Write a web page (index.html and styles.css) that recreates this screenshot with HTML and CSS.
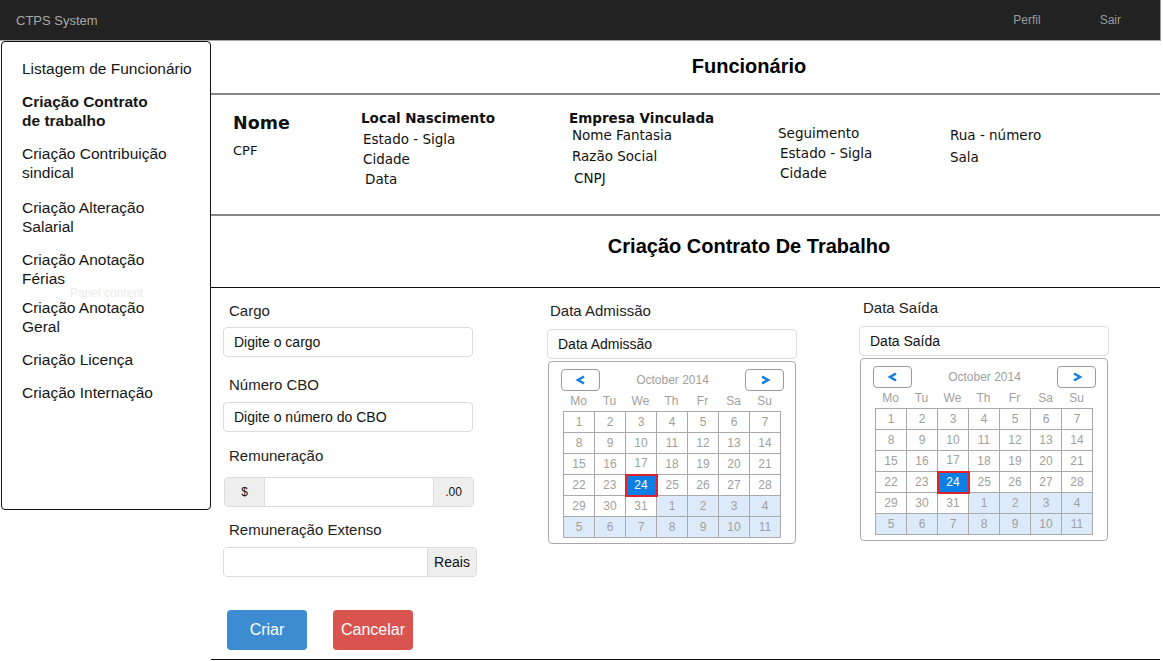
FILE: index.html
```html
<!DOCTYPE html>
<html lang="pt-BR">
<head>
<meta charset="utf-8">
<title>CTPS System</title>
<link rel="stylesheet" href="styles.css">
</head>
<body>
<header class="topbar">
  <span class="brand">CTPS System</span>
  <nav class="topnav"><a class="topnav-perfil">Perfil</a><a class="topnav-sair">Sair</a></nav>
</header>
<div class="layout">
  <aside class="sidebar">
    <a class="side-item">Listagem de Funcionário</a>
    <a class="side-item active">Criação Contrato<br>de trabalho</a>
    <a class="side-item">Criação Contribuição<br>sindical</a>
    <a class="side-item gap-lg">Criação Alteração<br>Salarial</a>
    <a class="side-item">Criação Anotação<br>Férias</a>
    <a class="side-item gap-sm">Criação Anotação<br>Geral</a>
    <a class="side-item">Criação Licença</a>
    <a class="side-item">Criação Internação</a>
    <span class="panel-ghost">Panel content</span>
  </aside>
  <main class="main">
    <section class="title-func"><h1 class="title">Funcionário</h1></section>
    <section class="info">
      <div class="info-col col-nome">
        <div class="nome">Nome</div>
        <div class="item cpf">CPF</div>
      </div>
      <div class="info-col col-local">
        <div class="info-head">Local Nascimento</div>
        <div class="item ind2 first">Estado - Sigla</div>
        <div class="item ind2">Cidade</div>
        <div class="item ind4">Data</div>
      </div>
      <div class="info-col col-empresa">
        <div class="info-head">Empresa Vinculada</div>
        <div class="item ind3 tight">Nome Fantasia</div>
        <div class="item ind3">Razão Social</div>
        <div class="item ind5 loose">CNPJ</div>
      </div>
      <div class="info-col col-seg">
        <div class="item">Seguimento</div>
        <div class="item ind2">Estado - Sigla</div>
        <div class="item ind2">Cidade</div>
      </div>
      <div class="info-col col-rua">
        <div class="item">Rua - número</div>
        <div class="item loose">Sala</div>
      </div>
    </section>
    <section class="title-contract"><h2 class="title">Criação Contrato De Trabalho</h2></section>
    <section class="form">
      <div class="col col-left">
        <label class="field-label">Cargo</label>
        <div class="input mt7">Digite o cargo</div>
        <label class="field-label mt19">Número CBO</label>
        <div class="input mt8">Digite o número do CBO</div>
        <label class="field-label mt15">Remuneração</label>
        <div class="input-group group-money mt12">
          <span class="addon addon-dollar">$</span>
          <span class="group-field"></span>
          <span class="addon addon-cents">.00</span>
        </div>
        <label class="field-label mt14">Remuneração Extenso</label>
        <div class="input-group group-extenso mt8">
          <span class="group-field"></span>
          <span class="addon addon-reais">Reais</span>
        </div>
        <div class="buttons">
          <button class="btn btn-primary">Criar</button>
          <button class="btn btn-danger">Cancelar</button>
        </div>
      </div>

      <div class="col col-mid">
        <label class="field-label">Data Admissão</label>
        <div class="input mt9">Data Admissão</div>
        <div class="cal">
          <div class="cal-nav">
            <span class="cal-btn"><svg width="12" height="10" viewBox="0 0 12 10"><polyline points="9,1.5 3,5 9,8.5" fill="none" stroke="#1a7fe0" stroke-width="2.6" stroke-linejoin="miter"/></svg></span>
            <span class="cal-month">October 2014</span>
            <span class="cal-btn"><svg width="12" height="10" viewBox="0 0 12 10"><polyline points="3,1.5 9,5 3,8.5" fill="none" stroke="#1a7fe0" stroke-width="2.6" stroke-linejoin="miter"/></svg></span>
          </div>
          <div class="cal-days"><span>Mo</span><span>Tu</span><span>We</span><span>Th</span><span>Fr</span><span>Sa</span><span>Su</span></div>
          <table class="cal-grid">
            <tr><td>1</td><td>2</td><td>3</td><td>4</td><td>5</td><td>6</td><td>7</td></tr>
            <tr><td>8</td><td>9</td><td>10</td><td>11</td><td>12</td><td>13</td><td>14</td></tr>
            <tr><td>15</td><td>16</td><td>17</td><td>18</td><td>19</td><td>20</td><td>21</td></tr>
            <tr><td>22</td><td>23</td><td class="sel">24</td><td>25</td><td>26</td><td>27</td><td>28</td></tr>
            <tr><td>29</td><td>30</td><td>31</td><td class="nx">1</td><td class="nx">2</td><td class="nx">3</td><td class="nx">4</td></tr>
            <tr><td class="nx">5</td><td class="nx">6</td><td class="nx">7</td><td class="nx">8</td><td class="nx">9</td><td class="nx">10</td><td class="nx">11</td></tr>
          </table>
        </div>
      </div>

      <div class="col col-right">
        <label class="field-label">Data Saída</label>
        <div class="input mt9">Data Saída</div>
        <div class="cal">
          <div class="cal-nav">
            <span class="cal-btn"><svg width="12" height="10" viewBox="0 0 12 10"><polyline points="9,1.5 3,5 9,8.5" fill="none" stroke="#1a7fe0" stroke-width="2.6" stroke-linejoin="miter"/></svg></span>
            <span class="cal-month">October 2014</span>
            <span class="cal-btn"><svg width="12" height="10" viewBox="0 0 12 10"><polyline points="3,1.5 9,5 3,8.5" fill="none" stroke="#1a7fe0" stroke-width="2.6" stroke-linejoin="miter"/></svg></span>
          </div>
          <div class="cal-days"><span>Mo</span><span>Tu</span><span>We</span><span>Th</span><span>Fr</span><span>Sa</span><span>Su</span></div>
          <table class="cal-grid">
            <tr><td>1</td><td>2</td><td>3</td><td>4</td><td>5</td><td>6</td><td>7</td></tr>
            <tr><td>8</td><td>9</td><td>10</td><td>11</td><td>12</td><td>13</td><td>14</td></tr>
            <tr><td>15</td><td>16</td><td>17</td><td>18</td><td>19</td><td>20</td><td>21</td></tr>
            <tr><td>22</td><td>23</td><td class="sel">24</td><td>25</td><td>26</td><td>27</td><td>28</td></tr>
            <tr><td>29</td><td>30</td><td>31</td><td class="nx">1</td><td class="nx">2</td><td class="nx">3</td><td class="nx">4</td></tr>
            <tr><td class="nx">5</td><td class="nx">6</td><td class="nx">7</td><td class="nx">8</td><td class="nx">9</td><td class="nx">10</td><td class="nx">11</td></tr>
          </table>
        </div>
      </div>
    </section>
  </main>
</div>
</body>
</html>
```

FILE: styles.css
```css
* { box-sizing: border-box; }
html, body { margin: 0; padding: 0; background: #fff; }
body {
  font-family: "Liberation Sans", Arial, sans-serif;
  color: #111;
  width: 1163px;
  height: 661px;
  overflow: hidden;
}

/* top bar */
.topbar {
  width: 1161px;
  height: 41px;
  background: #222;
  border-right: 1px solid #999;
  border-bottom: 1px solid #aaa;
  display: flex;
  align-items: center;
  padding-left: 16px;
}
.brand { font-size: 13px; color: #a8a8a8; }
.topnav { margin-left: auto; display: flex; font-size: 12px; color: #9a9a9a; }
.topnav-perfil { margin-right: 59px; }
.topnav-sair { margin-right: 39px; }

/* layout */
.layout { display: flex; align-items: flex-start; }

.sidebar {
  position: relative;
  margin-left: 1px;
  width: 210px;
  height: 469px;
  border: 1px solid #111;
  border-radius: 4px;
  background: #fff;
  padding: 17px 0 0 20px;
  display: flex;
  flex-direction: column;
  gap: 14px;
  font-size: 15.5px;
  line-height: 19px;
  color: #161616;
}
.side-item { display: block; }
.side-item.active { font-weight: bold; }
.side-item.gap-lg { margin-top: 2px; }
.side-item.gap-sm { margin-top: -4px; }
.panel-ghost {
  position: absolute;
  left: 68px;
  top: 242px;
  font-size: 12px;
  color: #ececec;
}

.main { width: 949px; }

.title {
  margin: 0;
  font-size: 20px;
  font-weight: bold;
  line-height: 22px;
  color: #000;
  text-align: center;
  padding-left: 127px;
}
.title-func {
  height: 54px;
  border-bottom: 2px solid #888;
  padding-top: 14px;
}
.title-contract {
  height: 72px;
  border-bottom: 1px solid #111;
  padding-top: 19px;
}

/* info */
.info {
  height: 121px;
  border-bottom: 2px solid #888;
  display: flex;
  padding-left: 22px;
  font-family: "DejaVu Sans", Verdana, sans-serif;
  font-size: 13.5px;
  color: #111;
}
.info-col { display: flex; flex-direction: column; }
.col-nome { width: 128px; padding-top: 17px; }
.col-local { width: 208px; padding-top: 14px; }
.col-empresa { width: 209px; padding-top: 14px; }
.col-seg { width: 172px; padding-top: 28px; }
.col-rua { padding-top: 30px; }
.nome { font-weight: bold; font-size: 17.5px; line-height: 22px; }
.cpf { margin-top: 7px; font-size: 13px; }
.info-head { font-weight: bold; font-size: 13.5px; line-height: 18px; }
.item { line-height: 20px; }
.first { margin-top: 2px; }
.ind2 { margin-left: 2px; }
.ind3 { margin-left: 3px; }
.ind4 { margin-left: 4px; }
.ind5 { margin-left: 5px; }
.tight { margin-top: -2px; line-height: 21px; }
.loose { margin-top: 2px; }

/* form */
.form {
  height: 372px;
  border-bottom: 1px solid #111;
  display: flex;
  padding: 14px 0 0 12px;
}
.col { display: flex; flex-direction: column; }
.col-left { width: 254px; }
.col-mid { width: 250px; margin-left: 70px; }
.col-right { width: 250px; margin-left: 62px; margin-top: -3px; }

.field-label {
  font-size: 15px;
  line-height: 18px;
  color: #222;
  margin-left: 6px;
}
.col-mid .field-label { margin-left: 3px; }
.col-right .field-label { margin-left: 4px; }

.mt7 { margin-top: 7px; }
.mt8 { margin-top: 8px; }
.mt9 { margin-top: 9px; }
.mt12 { margin-top: 12px; }
.mt14 { margin-top: 14px; }
.mt15 { margin-top: 15px; }
.mt19 { margin-top: 19px; }

.input {
  width: 250px;
  height: 30px;
  border: 1px solid #dcdcdc;
  border-radius: 4px;
  padding-left: 10px;
  font-size: 14px;
  line-height: 28px;
  color: #111;
}

.input-group {
  display: flex;
  height: 30px;
  border: 1px solid #dcdcdc;
  border-radius: 4px;
  overflow: hidden;
}
.group-money { width: 250px; margin-left: 1px; }
.group-extenso { width: 254px; }
.group-field { flex: 1; background: #fff; }
.addon {
  background: #eee;
  display: flex;
  align-items: center;
  justify-content: center;
  color: #111;
}
.addon-dollar { width: 40px; border-right: 1px solid #dcdcdc; font-size: 12px; }
.addon-cents { width: 40px; border-left: 1px solid #dcdcdc; font-size: 12px; }
.addon-reais { width: 49px; border-left: 1px solid #dcdcdc; font-size: 14px; }

.buttons { display: flex; gap: 26px; margin-top: 33px; margin-left: 4px; }
.btn {
  width: 80px;
  height: 40px;
  border: none;
  border-radius: 4px;
  color: #fff;
  font-family: "Liberation Sans", Arial, sans-serif;
  font-size: 16px;
  padding: 0;
}
.btn-primary { background: #3d8bd1; }
.btn-danger { background: #d9534f; }

/* calendar */
.cal {
  margin-top: 2px;
  margin-left: 1px;
  width: 248px;
  height: 183px;
  border: 1px solid #aaa;
  border-radius: 4px;
  padding: 7px 14px 0 14px;
}
.cal-nav {
  display: flex;
  align-items: center;
  justify-content: space-between;
  margin: 0 -3px 0 -2px;
  height: 22px;
}
.cal-btn {
  width: 39px;
  height: 22px;
  border: 1px solid #999;
  border-radius: 4px;
  display: flex;
  align-items: center;
  justify-content: center;
}
.cal-month { font-size: 12px; color: #a0a0a0; }
.cal-days {
  display: grid;
  grid-template-columns: repeat(7, 31px);
  height: 20px;
  line-height: 20px;
  font-size: 12px;
  color: #a0a0a0;
  text-align: center;
}
.cal-grid {
  border-collapse: collapse;
  table-layout: fixed;
  width: 218px;
  font-size: 12px;
  color: #a0a0a0;
}
.cal-grid td {
  border: 1px solid #aaa;
  height: 21px;
  padding: 0;
  text-align: center;
  line-height: 19px;
}
.cal-grid td.nx { background: #dceafa; }
.cal-grid td.sel {
  background: #0b7fe6;
  color: #fff;
  border: 2px solid #e0232a;
}
```
